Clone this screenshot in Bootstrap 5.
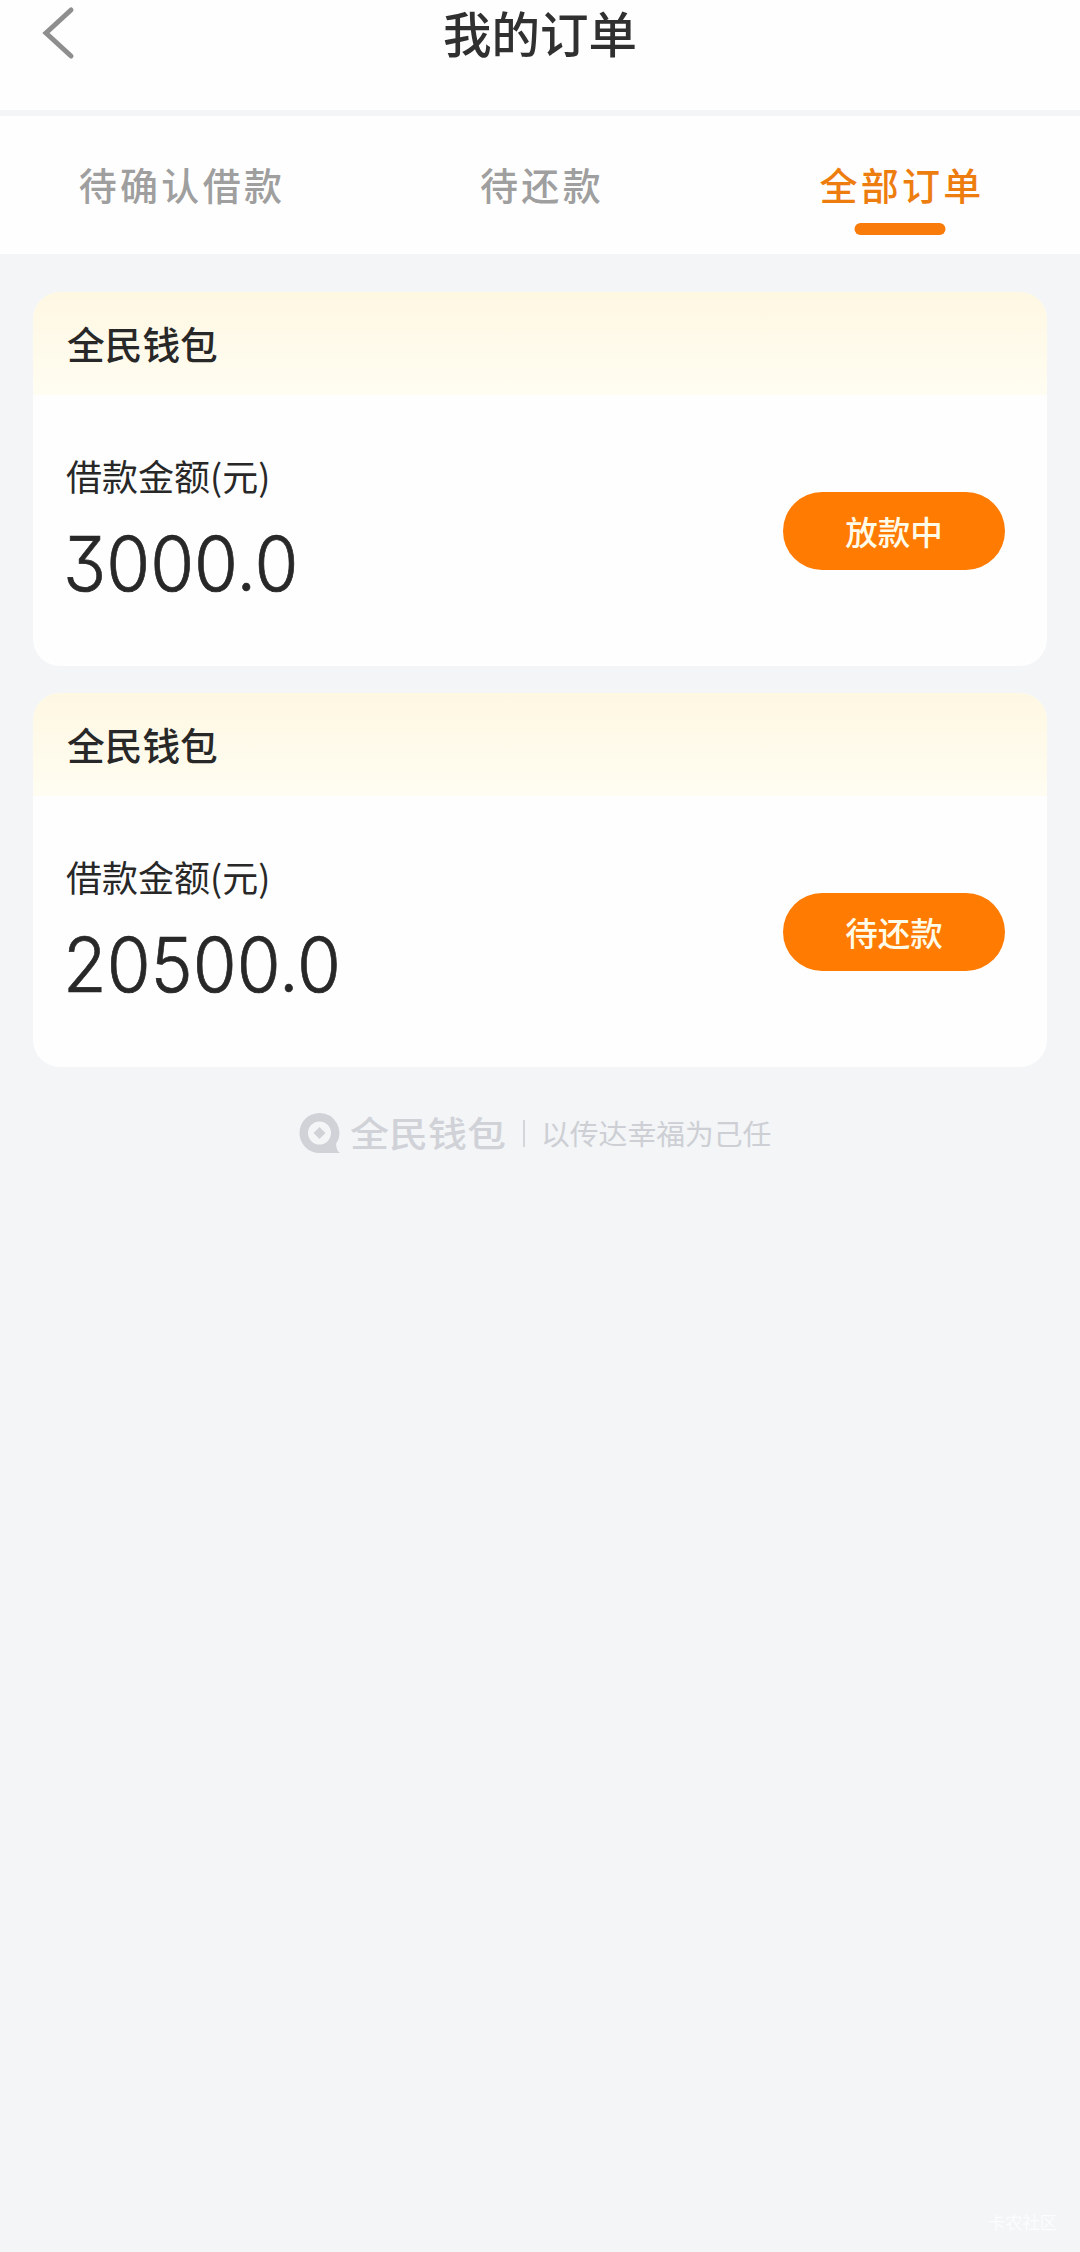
<!DOCTYPE html>
<html lang="zh-CN">
<head>
<meta charset="utf-8">
<meta name="viewport" content="width=device-width, initial-scale=1">
<title>我的订单</title>
<link href="https://cdn.jsdelivr.net/npm/bootstrap@5.3.0/dist/css/bootstrap.min.css" rel="stylesheet">
<style>
body { background: #f3f5f7; color: #282828; font-family: "Noto Sans CJK SC", sans-serif; min-height: 2252px; }
.topbar { height: 110px; background: #fefefe; }
.topbar h1 { font-size: 48.5px; line-height: 65px; font-weight: 500; color: #303030; }
.back { left: 40px; top: 5px; }
.tabs { height: 138px; margin-top: 6px; background: #fefefe; }
.tabs .nav-link { color: #9f9f9f; font-size: 38px; font-weight: 500; line-height: 50px; letter-spacing: 3.3px; padding: 43px 0 0 4px; border: 0; }
.tabs .nav-link.active { color: #ee7d10; }
.tabs .nav-link.active::after { content: ""; display: block; width: 91px; height: 12px; margin: 14px auto 0; border-radius: 6px; background: #f97b0a; transform: translateX(-2.5px); }
.orders { padding: 38px 33px 0; display: grid; gap: 27px; }
.order { height: 374px; border: 0; border-radius: 27px; background: #fefefe; overflow: hidden; }
.order-head { height: 103px; padding: 0 34px; background: linear-gradient(#fef7e2, #fffdf2); font-size: 37.7px; font-weight: 500; }
.order-main { padding: 56px 42px 0 33px; }
.label-text { font-size: 36px; line-height: 48px; }
.amount { font-family: Inter, sans-serif; font-feature-settings: "cv09"; font-weight: 300; -webkit-text-stroke: .7px #282828; font-size: 75px; line-height: 92px; margin: 19px 0 0 -3px; transform: scaleX(.948); transform-origin: left; }
.btn-state { width: 222px; height: 78px; margin-top: 41px; padding: 0; color: #fffbe9; background: #ff7b02; font-size: 32.5px; font-weight: 500; line-height: 76px; border: 0; }
.foot { margin-top: 31px; height: 70px; padding-left: 299px; color: #d0d2d7; }
.brand-name { font-size: 39px; font-weight: 500; line-height: 38px; margin: -3px 0 0 9px; transform: scaleY(.9); }
.bar { width: 2px; height: 27px; background: #d4d6da; margin: 0 16px 0 17px; }
.tagline { font-size: 28.8px; line-height: 40px; color: #cdcfd4; }
.watermark { right: 23px; bottom: 17px; font-size: 17.3px; line-height: 26px; color: #fcfdfe; }
</style>
</head>
<body class="position-relative">
<header class="topbar position-relative text-center">
  <svg class="back position-absolute" width="36" height="56" viewBox="0 0 36 56" fill="none" stroke="#8e8e8e" stroke-width="5" stroke-linecap="round"><path d="M31 5L6 28L31 51"/></svg>
  <h1 class="m-0">我的订单</h1>
</header>
<nav class="tabs nav nav-fill row g-0">
  <a class="nav-link col-4" href="#">待确认借款</a>
  <a class="nav-link col-4" href="#">待还款</a>
  <a class="nav-link col-4 active" href="#">全部订单</a>
</nav>
<main class="orders">
  <section class="card order">
    <div class="order-head d-flex align-items-center">全民钱包</div>
    <div class="order-main d-flex justify-content-between align-items-start">
      <div><div class="label-text">借款金额(元)</div><div class="amount">3000.0</div></div>
      <button class="btn btn-state rounded-pill" type="button">放款中</button>
    </div>
  </section>
  <section class="card order">
    <div class="order-head d-flex align-items-center">全民钱包</div>
    <div class="order-main d-flex justify-content-between align-items-start">
      <div><div class="label-text">借款金额(元)</div><div class="amount">20500.0</div></div>
      <button class="btn btn-state rounded-pill" type="button">待还款</button>
    </div>
  </section>
</main>
<footer class="foot d-flex align-items-center">
  <svg width="42" height="42" viewBox="0 0 42 42" fill="#d0d2d7"><path fill-rule="evenodd" d="M20.500 1A20 20 0 0 0 20.500 41H41Q37.500 39 37 32A20 20 0 0 0 20.500 1ZM20.500 9.500A11.500 11.500 0 1 1 20.500 32.500A11.500 11.500 0 0 1 20.500 9.500Z"/><path d="M20.500 15L26.500 21L20.500 27L14.500 21Z"/></svg>
  <span class="brand-name">全民钱包</span>
  <span class="bar"></span>
  <span class="tagline">以传达幸福为己任</span>
</footer>
<div class="watermark position-absolute">卡农社区</div>
<script src="https://cdn.jsdelivr.net/npm/bootstrap@5.3.0/dist/js/bootstrap.bundle.min.js"></script>
</body>
</html>
